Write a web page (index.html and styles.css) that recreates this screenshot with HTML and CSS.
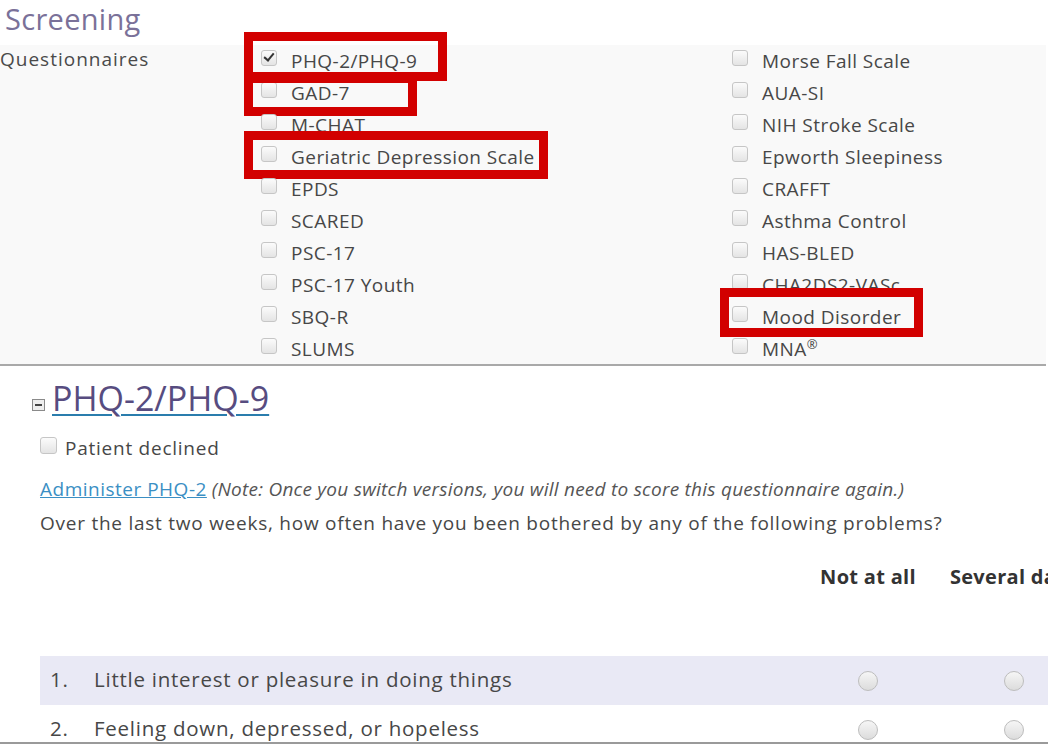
FILE: index.html
```html
<!DOCTYPE html>
<html>
<head>
<meta charset="utf-8">
<link rel="stylesheet" href="styles.css">
</head>
<body>
<div class="page">
  <h1 class="title">Screening</h1>
  <section class="panel">
    <div class="label">Questionnaires</div>
    <ul class="col">
      <li class="item hl hl-1"><span class="cb checked"></span><span>PHQ-2/PHQ-9</span></li>
      <li class="item hl hl-2"><span class="cb"></span><span>GAD-7</span></li>
      <li class="item"><span class="cb"></span><span>M-CHAT</span></li>
      <li class="item hl hl-3"><span class="cb"></span><span>Geriatric Depression Scale</span></li>
      <li class="item"><span class="cb"></span><span>EPDS</span></li>
      <li class="item"><span class="cb"></span><span>SCARED</span></li>
      <li class="item"><span class="cb"></span><span>PSC-17</span></li>
      <li class="item"><span class="cb"></span><span>PSC-17 Youth</span></li>
      <li class="item"><span class="cb"></span><span>SBQ-R</span></li>
      <li class="item"><span class="cb"></span><span>SLUMS</span></li>
    </ul>
    <ul class="col">
      <li class="item"><span class="cb"></span><span>Morse Fall Scale</span></li>
      <li class="item"><span class="cb"></span><span>AUA-SI</span></li>
      <li class="item"><span class="cb"></span><span>NIH Stroke Scale</span></li>
      <li class="item"><span class="cb"></span><span>Epworth Sleepiness</span></li>
      <li class="item"><span class="cb"></span><span>CRAFFT</span></li>
      <li class="item"><span class="cb"></span><span>Asthma Control</span></li>
      <li class="item"><span class="cb"></span><span>HAS-BLED</span></li>
      <li class="item"><span class="cb"></span><span>CHA2DS2-VASc</span></li>
      <li class="item hl hl-4"><span class="cb"></span><span>Mood Disorder</span></li>
      <li class="item"><span class="cb"></span><span>MNA<sup>®</sup></span></li>
    </ul>
  </section>

  <section class="phq">
    <h2 class="phq-head"><span class="collapse"></span><a class="phq-title" href="#">PHQ-2/PHQ-9</a></h2>
    <label class="declined"><span class="cb"></span><span>Patient declined</span></label>
    <p class="note"><a class="link" href="#">Administer PHQ-2</a> <em>(Note: Once you switch versions, you will need to score this questionnaire again.)</em></p>
    <p class="prompt">Over the last two weeks, how often have you been bothered by any of the following problems?</p>

    <div class="qtable">
      <div class="qrow qhead">
        <div class="qtext"></div>
        <div class="qopt">Not at all</div>
        <div class="qopt">Several days</div>
      </div>
      <div class="qrow shaded">
        <div class="qtext"><span class="num">1.</span><span>Little interest or pleasure in doing things</span></div>
        <div class="qopt"><span class="radio"></span></div>
        <div class="qopt"><span class="radio"></span></div>
      </div>
      <div class="qrow">
        <div class="qtext"><span class="num">2.</span><span>Feeling down, depressed, or hopeless</span></div>
        <div class="qopt"><span class="radio"></span></div>
        <div class="qopt"><span class="radio"></span></div>
      </div>
    </div>
  </section>
  <div class="footer-edge"></div>
</div>
</body>
</html>
```

FILE: styles.css
```css
*, *::before, *::after { box-sizing: border-box; }
html, body { margin: 0; padding: 0; }
body {
  font-family: "Open Sans", "DejaVu Sans", sans-serif;
  color: #474747;
  background: #fff;
  width: 1048px;
  height: 754px;
  overflow: hidden;
}
.page { position: relative; width: 1048px; height: 754px; overflow: hidden; }

.title {
  margin: 0;
  padding-left: 5px;
  height: 45px;
  font-weight: 400;
  font-size: 29px;
  letter-spacing: 0.3px;
  line-height: 38px;
  color: #7a7199;
}

.panel {
  display: grid;
  grid-template-columns: 261px 471px 1fr;
  background: #f9f9f9;
  border-bottom: 2px solid #a9a9a9;
  height: 321px;
  margin-right: 2px;
}
.label {
  font-size: 19px;
  letter-spacing: 1px;
  line-height: 28px;
  color: #4a4a4a;
}
.col { list-style: none; margin: 0; padding: 0; }
.item {
  position: relative;
  display: flex;
  align-items: center;
  gap: 14px;
  height: 32px;
  font-size: 19px;
  letter-spacing: 0.45px;
  color: #474747;
}
.item sup { font-size: 13px; vertical-align: 7px; line-height: 0; letter-spacing: 0; }

.cb {
  flex: none;
  position: relative;
  display: inline-block;
  width: 16px;
  height: 16px;
  border: 1px solid #c6c6c6;
  border-radius: 3px;
  background: linear-gradient(#fbfbfb, #e4e4e4);
  margin-top: -7px;
}
.cb.checked::after {
  content: "";
  position: absolute;
  left: 4px;
  top: 0px;
  width: 6px;
  height: 10px;
  border: solid #333;
  border-width: 0 2.5px 2.5px 0;
  transform: rotate(40deg);
}

.hl::after {
  content: "";
  position: absolute;
  border: 9px solid #d20000;
  pointer-events: none;
}
.hl-1::after { left: -17px; top: -13px; width: 203px; height: 49px; }
.hl-2::after { left: -17px; top: -3px; width: 173px; height: 42px; }
.hl-3::after { left: -17px; top: -10px; width: 304px; height: 48px; }
.hl-4::after { left: -12px; top: -13px; width: 203px; height: 49px; }

.phq { padding-left: 40px; }
.phq-head {
  margin: 12px 0 0 -8px;
  display: flex;
  align-items: flex-end;
  font-weight: 400;
  font-size: 34px;
  line-height: 40px;
  height: 40px;
}
.collapse {
  position: relative;
  flex: none;
  width: 13px;
  height: 12px;
  border: 1px solid #8a8a8a;
  background: #eee;
  margin: 0 7px 7px 0;
}
.collapse::after {
  content: "";
  position: absolute;
  left: 2px;
  right: 2px;
  top: 4px;
  height: 1.5px;
  background: #444;
}
.phq-title {
  color: #574c80;
  text-decoration: underline;
  text-decoration-color: #2a7dad;
  text-decoration-thickness: 2px;
  text-underline-offset: 3px;
}

.declined {
  display: flex;
  align-items: center;
  gap: 8px;
  margin-top: 17px;
  height: 26px;
  font-size: 19px;
  letter-spacing: 0.75px;
}
.declined .cb { margin-top: -6px; width: 17px; height: 17px; }

.note, .prompt {
  margin: 0;
  font-size: 19px;
  line-height: 26px;
  color: #474747;
}
.note { margin-top: 15px; }
.link { color: #3b8fc4; text-decoration: underline; letter-spacing: 0.5px; }
.note em { color: #555; letter-spacing: 0.25px; }
.prompt { margin-top: 8px; letter-spacing: 0.75px; }

.qtable { margin-top: 10px; width: 1047px; }
.qrow {
  display: grid;
  grid-template-columns: 755px 146px 146px;
  align-items: center;
}
.qhead { height: 110px; align-items: start; }
.qhead .qopt {
  padding-top: 18px;
  font-weight: 700;
  font-size: 20px;
  line-height: 26px;
  color: #333;
  white-space: nowrap;
  letter-spacing: 0.3px;
}
.qtext {
  display: flex;
  font-size: 20.5px;
  letter-spacing: 0.75px;
  color: #474747;
  padding-left: 10px;
  padding-bottom: 3px;
}
.num { width: 44px; }
.qopt { text-align: center; }
.qrow:not(.qhead) { height: 49px; }
.shaded { background: #e9e9f5; }
.radio {
  display: inline-block;
  width: 20px;
  height: 20px;
  border: 1px solid #bdbdbd;
  border-radius: 50%;
  background: linear-gradient(#f6f6f6, #dcdcdc);
  vertical-align: middle;
  margin-top: -3px;
}

.footer-edge {
  position: absolute;
  left: 0;
  right: 0;
  top: 742px;
  bottom: 0;
  background: #fff;
  border-top: 2px solid #9a9a9a;
}
```
